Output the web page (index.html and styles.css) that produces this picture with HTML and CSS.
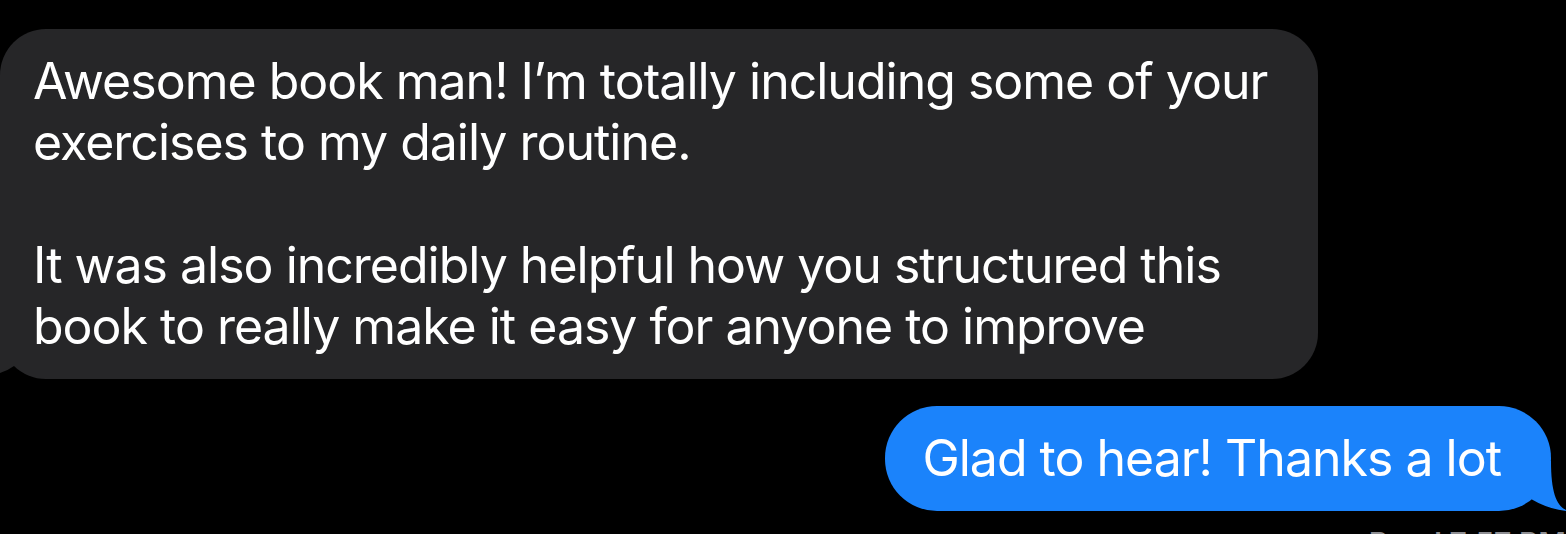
FILE: index.html
```html
<!DOCTYPE html>
<html lang="en">
<head>
<meta charset="utf-8">
<title>Messages</title>
<link rel="stylesheet" href="styles.css">
</head>
<body>
<main class="thread">
  <div class="row row-in">
    <div class="bubble bubble-in">
      <p class="msg">Awesome book man! I’m totally including some of your<br>exercises to my daily routine.</p>
      <p class="msg gap">It was also incredibly helpful how you structured this<br>book to really make it easy for anyone to improve</p>
      <svg class="tail tail-in" width="16" height="48" viewBox="0 0 16 48"><path d="M0 0 L14 0 L14 35 Q7 40 0 42 Z" fill="#262628"/></svg>
    </div>
  </div>
  <div class="row row-out">
    <div class="bubble bubble-out">
      <p class="msg">Glad to hear! Thanks a lot</p>
      <svg class="tail tail-out" width="40" height="50" viewBox="0 0 40 50"><path d="M5 0 L25 0 C25 30 30 44 40 49 L40 50 Q22 48 5 38 Z" fill="#1b83fb"/></svg>
    </div>
  </div>
  <div class="receipt">Read 7:57 PM</div>
</main>
</body>
</html>
```

FILE: styles.css
```css
html, body {
  margin: 0;
  padding: 0;
  background: #000;
  overflow: hidden;
  height: 100%;
}

.thread {
  display: flex;
  flex-direction: column;
  padding-top: 29px;
  font-family: "Inter", "Helvetica Neue", Arial, sans-serif;
  color: #fff;
}

.row {
  display: flex;
}

.row-in {
  justify-content: flex-start;
}

.row-out {
  justify-content: flex-end;
  margin-top: 27px;
  padding-right: 15px;
}

.bubble {
  position: relative;
  border-radius: 46px;
}

.bubble-in {
  background: #262628;
  width: 1318px;
  box-sizing: border-box;
  padding: 22px 20px 22px 33px;
}

.bubble-out {
  background: #1b83fb;
  border-radius: 52px;
  height: 105px;
  box-sizing: border-box;
  padding: 22px 50px 0 37px;
}

.msg {
  margin: 0;
  font-size: 50px;
  line-height: 61.3px;
  letter-spacing: -1px;
  white-space: nowrap;
}

.msg.gap {
  margin-top: 61.3px;
}

.tail {
  position: absolute;
  bottom: 0;
  display: block;
}

.tail-in {
  left: 0;
}

.tail-out {
  right: -15px;
}

.receipt {
  align-self: flex-end;
  margin-top: 14px;
  padding-right: 0;
  font-size: 30px;
  font-weight: 600;
  color: #8e8e93;
  font-family: "Inter", Arial, sans-serif;
}
```
